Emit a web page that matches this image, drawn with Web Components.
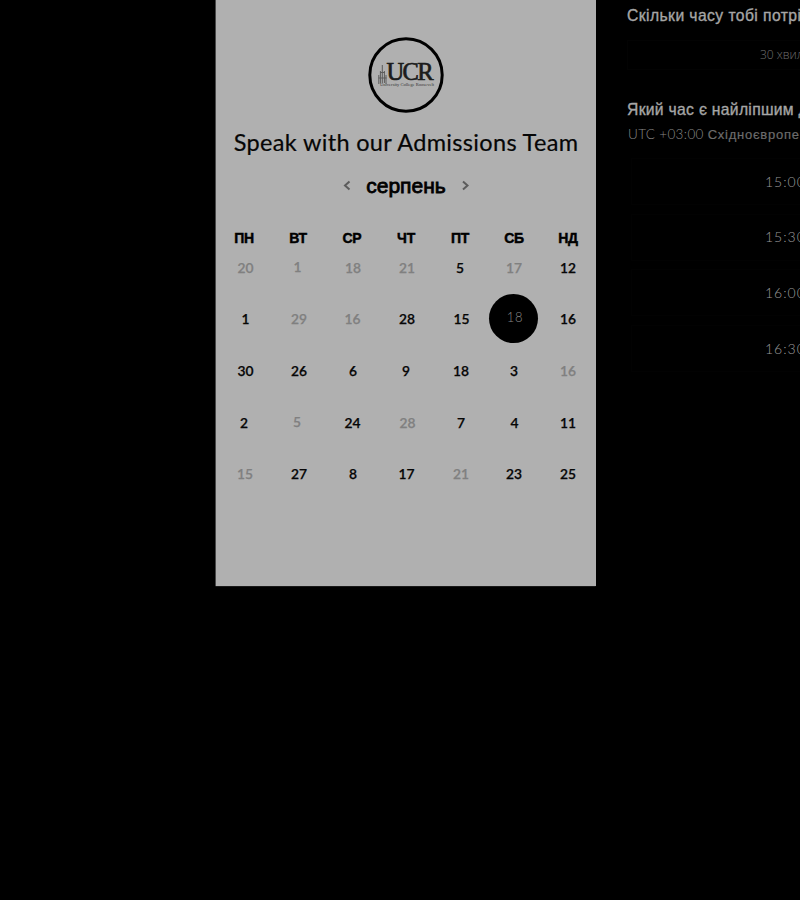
<!DOCTYPE html>
<html lang="uk">
<head>
<meta charset="utf-8">
<title>Speak with our Admissions Team</title>
<style>
html,body{margin:0;background:#000;height:900px;overflow:hidden}
body{font-family:"Liberation Sans",Arial,sans-serif}
</style>
</head>
<body>
<booking-page></booking-page>
<script>
const define = (name, html, init) => customElements.define(name, class extends HTMLElement {
  connectedCallback() {
    if (this.shadowRoot) return;
    this.attachShadow({mode: 'open'}).innerHTML = html;
    if (init) init.call(this, this.shadowRoot);
  }
});

define('college-logo', `<style>
:host{display:block;width:76px;height:76px}svg{display:block}
</style>
<svg width="76" height="76" viewBox="0 0 76 76">
<circle cx="38" cy="38" r="36.2" fill="none" stroke="#000" stroke-width="3"/>
<g fill="none" stroke="#5c5c5c" stroke-width="1">
<path d="M14.300 28v18M12.400 34v12M16.400 34v12M10.800 38v9M18 38v9M10.500 41h8M12 35.500h5"/>
</g>
<text x="18.500" y="43.300" font-family="Liberation Serif,serif" font-size="24.500" textLength="47" lengthAdjust="spacing" fill="#1c1c1c" stroke="#1c1c1c" stroke-width=".7">UCR</text>
<text x="12" y="49" font-family="Liberation Serif,serif" font-size="4.500" textLength="54" fill="#333">University College Roosevelt</text>
</svg>`);

define('month-switcher', `<style>
:host{display:flex;align-items:center;justify-content:center;height:26px;gap:15px}
svg{display:block;width:8px;height:12px;fill:none;stroke:#5c5c5c;stroke-width:2}
span{font-size:21px;line-height:26px;width:81px;text-align:center;white-space:nowrap;-webkit-text-stroke:.8px #000}
</style>
<svg viewBox="0 0 8 12"><path d="M6.500 1.500 2 5.500l4.500 4"/></svg><span><slot></slot></span><svg viewBox="0 0 8 12"><path d="M1 1.500 5.500 5.500l-4.500 4"/></svg>`);

define('day-cell', `<style>
:host{display:flex;align-items:center;justify-content:center;position:relative;font:600 13.800px/18px Lato,sans-serif;color:#060606;-webkit-text-stroke:.25px}
:host([muted]){color:#808080}
:host([selected]){color:#858585;font-weight:300;font-size:13px;letter-spacing:.7px;-webkit-text-stroke:0}
:host([selected])::before{content:"";position:absolute;left:1.500px;top:.5px;width:49px;height:49px;border-radius:50%;background:#000}
span{position:relative}
</style><span><slot></slot></span>`, function (root) {
  const s = root.querySelector('span').style;
  s.left = (this.getAttribute('dx') || 0) + 'px';
  s.top = (this.getAttribute('dy') || 0) + 'px';
});

define('month-grid', `<style>
:host{display:block;width:378px;margin-left:1px}
.head,.days{display:grid;grid-template-columns:repeat(7,54px)}
.head{font:bold 14px/18px "Liberation Sans",Arial,sans-serif;text-align:center;-webkit-text-stroke:.45px #000;letter-spacing:-.3px}
.days{grid-auto-rows:51.750px;margin-top:-5.400px}
</style><div class="head"></div><div class="days"></div>`, root => {
  root.querySelector('.head').innerHTML = ['ПН','ВТ','СР','ЧТ','ПТ','СБ','НД'].map(d => `<span>${d}</span>`).join('');
  // [label, state, dx, dy]
  const days = [
    [20,'muted',1.5],[1,'muted',-.5,-1],[18,'muted',1],[21,'muted',1],[5,'',0],[17,'muted',0],[12,'',0],
    [1,'',1.5],[29,'muted',1],[16,'muted',.5],[28,'',1],[15,'',1.5],[18,'selected',1,-2],[16,'',0],
    [30,'',1.5],[26,'',1],[6,'',1],[9,'',0],[18,'',1],[3,'',0],[16,'muted',0],
    [2,'',0],[5,'muted',-1,-1],[24,'',.5],[28,'muted',1.5],[7,'',1],[4,'',.5],[11,'',0],
    [15,'muted',1],[27,'',1],[8,'',1],[17,'',.5],[21,'muted',1],[23,'',0],[25,'',0]];
  root.querySelector('.days').innerHTML = days.map(([n,s,x,y],i) => `<day-cell ${s} dx="${x}" dy="${(y||0)+(i<7?1:0)}">${n}</day-cell>`).join('');
});

define('calendar-card', `<style>
:host{display:flex;flex-direction:column;width:380px;height:586px;background:#b0b0b0;border:solid #484848;border-width:0 0 0 1px;box-sizing:border-box;box-shadow:0 1px 0 -.5px #333}
college-logo{margin:37px auto 0 151.500px}
h1{margin:12.500px 0 0;height:32px;font:400 23.500px/32px Lato,sans-serif;text-align:center;white-space:nowrap;letter-spacing:.33px;color:#060606;-webkit-text-stroke:.2px #060606}
month-switcher{margin-top:15px}
month-grid{margin-top:30.500px}
</style>
<college-logo></college-logo><h1>Speak with our Admissions Team</h1>
<month-switcher>серпень</month-switcher><month-grid></month-grid>`);

define('time-slot', `<style>
:host{display:flex;align-items:center;box-sizing:border-box;width:340px;height:47px;padding-left:133px;border:1px solid #020202;font:300 14px/20px Lato,sans-serif;letter-spacing:1px;color:#999}
</style><slot></slot>`);

define('options-panel', `<style>
:host{display:block;width:360px;white-space:nowrap;padding-top:5.500px;box-sizing:border-box}
h2{margin:0;font:400 15.700px/20px "Liberation Sans",Arial,sans-serif;letter-spacing:.42px;color:#a6a6a6;-webkit-text-stroke:.35px #a6a6a6}
.duration{box-sizing:border-box;height:30px;margin-top:14px;padding-left:132px;border:1px solid #030303;font:300 12px/28px "Open Sans",sans-serif;color:#707070}
.second{margin-top:30.500px;letter-spacing:.3px}
.zone{height:20px;margin:4px 0 0 1px;font:13px/20px "Liberation Sans",Arial,sans-serif;color:#6c6c6c;letter-spacing:.76px;-webkit-text-stroke:.2px}
.zone b{font:300 13.500px/20px Lato,sans-serif;letter-spacing:.35px;margin-right:-.5px;color:#888;-webkit-text-stroke:0}
.slots{display:grid;gap:8.700px;margin:14px 0 0 4px}
</style>
<h2>Скільки часу тобі потрібно?</h2>
<div class="duration">30 хвилин</div>
<h2 class="second">Який час є найліпшим для тебе?</h2>
<div class="zone"><b>UTC +03:00</b> Східноєвропейський час</div>
<div class="slots"><time-slot>15:00</time-slot><time-slot>15:30</time-slot><time-slot>16:00</time-slot><time-slot>16:30</time-slot></div>`);

define('booking-page', `<style>
:host{display:grid;grid-template-columns:381px 360px;column-gap:31px;padding-left:215px;width:800px;height:900px;box-sizing:border-box;overflow:hidden;background:#000}
calendar-card{width:381px}
</style><calendar-card></calendar-card><options-panel></options-panel>`);
</script>
</body>
</html>
